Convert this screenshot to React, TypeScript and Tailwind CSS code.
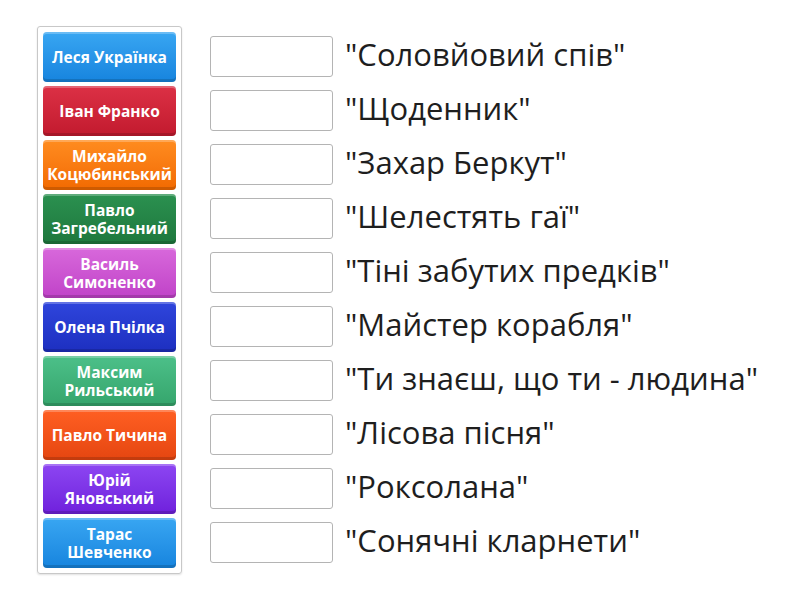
const items = [
  { name: "Леся Українка", bg: "bg-gradient-to-b from-[#38a6f2] to-[#1684de]" },
  { name: "Іван Франко", bg: "bg-gradient-to-b from-[#dc3045] to-[#c21a2e]" },
  { name: "Михайло Коцюбинський", bg: "bg-gradient-to-b from-[#ff8c1f] to-[#f26a00]" },
  { name: "Павло Загребельний", bg: "bg-gradient-to-b from-[#2b9150] to-[#1e783d]" },
  { name: "Василь Симоненко", bg: "bg-gradient-to-b from-[#d868db] to-[#c042c8]" },
  { name: "Олена Пчілка", bg: "bg-gradient-to-b from-[#2f45dc] to-[#1d2fc0]" },
  { name: "Максим Рильський", bg: "bg-gradient-to-b from-[#4cc089] to-[#35a56c]" },
  { name: "Павло Тичина", bg: "bg-gradient-to-b from-[#ff5f22] to-[#e54610]" },
  { name: "Юрій Яновський", bg: "bg-gradient-to-b from-[#8d45f2] to-[#6f1fdc]" },
  { name: "Тарас Шевченко", bg: "bg-gradient-to-b from-[#38a6f2] to-[#1684de]" },
];

const titles = [
  "\"Соловйовий спів\"",
  "\"Щоденник\"",
  "\"Захар Беркут\"",
  "\"Шелестять гаї\"",
  "\"Тіні забутих предків\"",
  "\"Майстер корабля\"",
  "\"Ти знаєш, що ти - людина\"",
  "\"Лісова пісня\"",
  "\"Роксолана\"",
  "\"Сонячні кларнети\"",
];

export default function App() {
  return (
    <div className="w-[800px] h-[600px] bg-white flex items-start gap-[28px] pl-[37px] pt-[26px] font-['Open_Sans',sans-serif]">
      <div className="w-[145px] flex flex-col gap-[4px] p-[5px] border border-[#c8c8c8] rounded-[3px] shadow-[0_1px_2px_rgba(0,0,0,0.12)]">
        {items.map((it) => (
          <div
            key={it.name}
            className={`${it.bg} h-[50px] rounded-[4px] flex items-center justify-center text-center text-white font-bold text-[15.5px] leading-[18px] px-[3px] shadow-[inset_0_2px_0_rgba(255,255,255,0.25),inset_0_-3px_0_rgba(0,0,0,0.15)]`}
          >
            {it.name}
          </div>
        ))}
      </div>
      <div className="flex flex-col gap-[13px] pt-[10px]">
        {titles.map((t) => (
          <div key={t} className="flex items-center gap-[12px] h-[41px]">
            <div className="w-[123px] h-[41px] border border-[#b4b4b4] rounded-[3px] bg-white" />
            <span className="text-[31px] leading-[41px] -translate-y-[2px] text-[#1e1e1e] whitespace-nowrap">{t}</span>
          </div>
        ))}
      </div>
    </div>
  );
}
